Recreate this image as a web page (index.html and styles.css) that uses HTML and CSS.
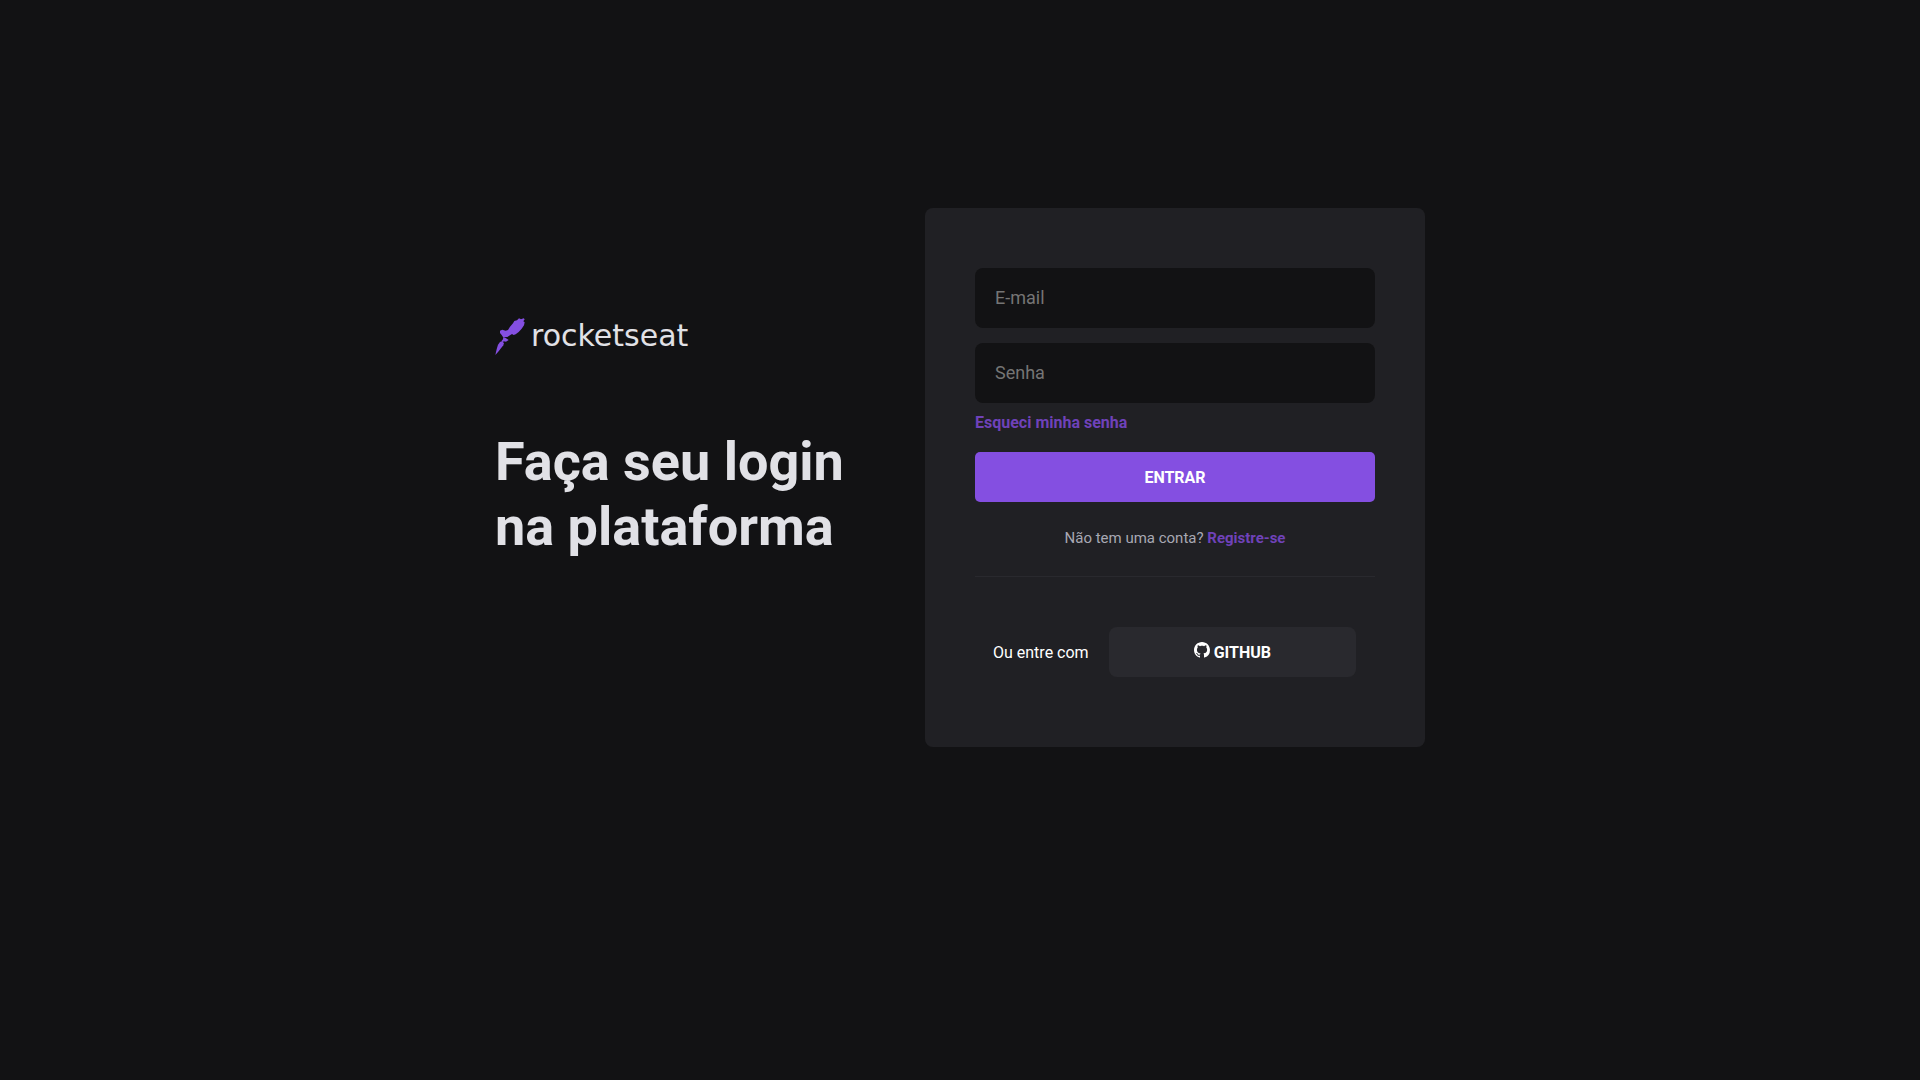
FILE: index.html
```html
<!DOCTYPE html>
<html lang="pt-BR">
<head>
<meta charset="utf-8">
<meta name="viewport" content="width=device-width, initial-scale=1">
<title>Rocketseat | Login</title>
<link rel="stylesheet" href="styles.css">
</head>
<body>
<main class="page">
  <section class="intro">
    <div class="logo">
      <svg class="logo-mark" viewBox="30 38 90 111" aria-hidden="true">
        <path d="M102 39 108 42 116 39 119 42 115 48 119 51 117 60 110 70 101 80 92 87 86 89 81 86 75 90 67 95 54 95 50 89 45 83 45 76 52 73 62 76 69 74 75 64 84 54 88 47 96 45Z"/>
        <path d="M55 95 61 97 71 104 63 109 56 108 53 112 50 106 54 102Z"/>
        <path d="M45 110 50 108 57 113 55 120 48 129 39 140 31 149 35 132 39 118Z"/>
      </svg>
      <span class="logo-name">rocketseat</span>
    </div>
    <h1 class="title">Faça seu login na plataforma</h1>
  </section>
  <section class="card">
    <form class="form">
      <input class="field" type="email" placeholder="E-mail" aria-label="E-mail">
      <input class="field" type="password" placeholder="Senha" aria-label="Senha">
      <a class="link forgot" href="#">Esqueci minha senha</a>
      <button class="button submit" type="submit">ENTRAR</button>
    </form>
    <p class="register">Não tem uma conta? <a class="link" href="#">Registre-se</a></p>
    <div class="social">
      <span>Ou entre com</span>
      <button class="button github" type="button">
        <svg class="github-icon" viewBox="0 0 16 16" aria-hidden="true"><path d="M8 0C3.58 0 0 3.58 0 8c0 3.54 2.29 6.53 5.47 7.59.4.07.55-.17.55-.38 0-.19-.01-.82-.01-1.49-2.01.37-2.53-.49-2.69-.94-.09-.23-.48-.94-.82-1.13-.28-.15-.68-.52-.01-.53.63-.01 1.08.58 1.23.82.72 1.21 1.87.87 2.33.66.07-.52.28-.87.51-1.07-1.78-.2-3.64-.89-3.64-3.95 0-.87.31-1.59.82-2.15-.08-.2-.36-1.02.08-2.12 0 0 .67-.21 2.2.82.64-.18 1.32-.27 2-.27s1.36.09 2 .27c1.53-1.04 2.2-.82 2.2-.82.44 1.1.16 1.92.08 2.12.51.56.82 1.27.82 2.15 0 3.07-1.87 3.75-3.65 3.95.29.25.54.73.54 1.48 0 1.07-.01 1.93-.01 2.2 0 .21.15.46.55.38A8.01 8.01 0 0 0 16 8c0-4.42-3.58-8-8-8z"/></svg>
        GITHUB
      </button>
    </div>
  </section>
</main>
</body>
</html>
```
FILE: styles.css
```css
* {
  box-sizing: border-box;
  margin: 0;
}

body {
  background: #121214;
  color: #fff;
  font: 16px/21px Roboto, sans-serif;
}

.page {
  display: grid;
  grid-template-columns: minmax(0, 430px) minmax(0, 500px);
  justify-content: center;
  align-items: start;
  padding: 208px 24px 48px;
}

.intro {
  padding-top: 110px;
}

.logo {
  display: flex;
  align-items: center;
  gap: 6px;
  height: 36px;
  color: #e1e1e6;
}

.logo-mark {
  width: 30px;
  height: 37px;
  fill: #844fe1;
}

.logo-name {
  font: 30px/32px "DejaVu Sans", sans-serif;
}

.title {
  max-width: 360px;
  margin-top: 75px;
  color: #e1e1e6;
  font-size: 54px;
  line-height: 65px;
}

.card {
  padding: 60px 50px 70px;
  border-radius: 8px;
  background: #202024;
}

.form {
  display: flex;
  flex-direction: column;
}

.field {
  width: 100%;
  height: 60px;
  margin-bottom: 15px;
  padding: 0 20px 2px;
  border: 0;
  border-radius: 8px;
  background: #121214;
  color: #e1e1e6;
  font: 18px Roboto, sans-serif;
}

.field::placeholder {
  color: #757575;
}

.link {
  color: #6f42b9;
  font-weight: 700;
  text-decoration: none;
}

.forgot {
  align-self: flex-start;
  margin: -6px 0 19px;
}

.button {
  height: 50px;
  border: 0;
  color: #fff;
  font: 700 16px Roboto, sans-serif;
  cursor: pointer;
}

.submit {
  border-radius: 5px;
  background: #844fe1;
}

.register {
  padding: 26px 0 27px;
  border-bottom: 1px solid #29292e;
  color: #a8a8b3;
  font-size: 15px;
  text-align: center;
}

.social {
  display: flex;
  align-items: center;
  gap: 20px;
  padding: 50px 19px 0 18px;
}

.github {
  display: flex;
  flex: 1;
  justify-content: center;
  align-items: center;
  gap: 4px;
  border-radius: 8px;
  background: #29292e;
}

.github-icon {
  width: 16px;
  height: 16px;
  margin-bottom: 4px;
  fill: #fff;
}
```
